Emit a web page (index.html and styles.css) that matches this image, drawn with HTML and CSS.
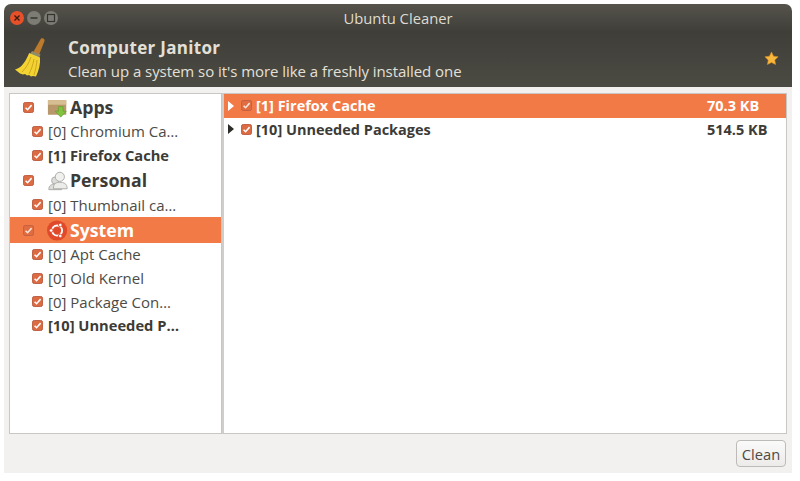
FILE: index.html
```html
<!DOCTYPE html>
<html lang="en">
<head>
<meta charset="utf-8">
<title>Ubuntu Cleaner</title>
<link rel="stylesheet" href="styles.css">
</head>
<body>
<svg class="defs" width="0" height="0" aria-hidden="true"><defs>
  <symbol id="check" viewBox="0 0 12 12">
    <rect x="0.5" y="0.5" width="11" height="11" rx="2" fill="#dc6a42" stroke="#b9583a"/>
    <path d="M2.8 6.2 5 8.4 9.4 3.4" fill="none" stroke="#fff" stroke-width="1.7"/>
  </symbol>
</defs></svg>
<main class="window">
  <header class="header">
    <div class="titlebar">
      <div class="controls">
        <span class="ctl ctl-close"><svg viewBox="0 0 14 14" width="14" height="14"><path d="M4.500 4.500l5 5M9.500 4.500l-5 5" stroke="#3a1d12" stroke-width="1.400"/></svg></span>
        <span class="ctl"><svg viewBox="0 0 14 14" width="14" height="14"><path d="M3.500 7h7" stroke="#34332e" stroke-width="1.500"/></svg></span>
        <span class="ctl"><svg viewBox="0 0 14 14" width="14" height="14"><rect x="3.500" y="3.500" width="7" height="7" fill="none" stroke="#34332e" stroke-width="1.200"/></svg></span>
      </div>
      <div class="title">Ubuntu Cleaner</div>
    </div>
    <div class="banner">
      <svg class="broom" viewBox="0 0 36 42" width="36" height="42">
        <path d="M29 1.500c2-1 4 .500 3.500 2.500L27 18l-6-2.500z" fill="#bb7a2c"/>
        <path d="M20 14l8.500 3.500-1.500 3.500-9-4z" fill="#8f8c6c"/>
        <path d="M17 16l11 4.500c.5 6-1 13-4 19l-3-.500-2 .500-2-1.500-2 .500-2-1.500-2 .500-3-1-5-4c4-1 9-4 14-16z" fill="#f3d332"/>
        <path d="M19 20c-2 6-5 11-9 15M22 22c-1 6-3 11-5 15M25 23c-.5 5-1.500 10-3 15" fill="none" stroke="#cda621" stroke-width="1"/>
      </svg>
      <div class="banner-text">
        <div class="banner-title">Computer Janitor</div>
        <div class="banner-sub">Clean up a system so it's more like a freshly installed one</div>
      </div>
      <svg class="star" viewBox="0 0 16 16" width="15" height="15"><path d="M8 1l2.200 4.500 4.900.700-3.600 3.400.900 4.900L8 12.200l-4.400 2.300.900-4.900L.900 6.200l4.900-.700z" fill="#f6b73c" stroke="#d98a1f" stroke-width=".6"/></svg>
    </div>
  </header>
  <div class="content">
    <div class="panes">
      <nav class="side">
        <div class="row-cat"><svg class="cb"><use href="#check"/></svg>
          <svg class="cat-icon" viewBox="0 0 24 24"><path d="M1 4h20v16H1z" fill="#b8986a"/><path d="M1 4h20v5H1z" fill="#d6bd92"/><path d="M12.500 11h5v5h3.500l-6 6.500-6-6.500h3.500z" fill="#82c23f" stroke="#5a9628" stroke-width=".6"/></svg>
          <span>Apps</span></div>
        <div class="row-item"><svg class="cb"><use href="#check"/></svg><span>[0] Chromium Ca…</span></div>
        <div class="row-item bold"><svg class="cb"><use href="#check"/></svg><span>[1] Firefox Cache</span></div>
        <div class="row-cat"><svg class="cb"><use href="#check"/></svg>
          <svg class="cat-icon" viewBox="0 0 24 24"><circle cx="9" cy="12" r="4" fill="#dcdcd8" stroke="#a9a9a4"/><path d="M2 22c0-5 3-6 7-6s7 1 7 6z" fill="#dcdcd8" stroke="#a9a9a4"/><circle cx="14" cy="8" r="5" fill="#f0f0ee" stroke="#a9a9a4"/><path d="M7 21c0-6 3-7 7-7s8 1 8 7z" fill="#ececea" stroke="#a9a9a4"/></svg>
          <span>Personal</span></div>
        <div class="row-item"><svg class="cb"><use href="#check"/></svg><span>[0] Thumbnail ca…</span></div>
        <div class="row-cat selected"><svg class="cb"><use href="#check"/></svg>
          <svg class="cat-icon" viewBox="0 0 24 24"><circle cx="11" cy="12" r="11" fill="#e0492a"/><circle cx="11" cy="12" r="5.500" fill="none" stroke="#fff" stroke-width="2"/><circle cx="4.500" cy="12" r="2" fill="#fff" stroke="#e0492a"/><circle cx="14.500" cy="6" r="2" fill="#fff" stroke="#e0492a"/><circle cx="14.500" cy="18" r="2" fill="#fff" stroke="#e0492a"/></svg>
          <span>System</span></div>
        <div class="row-item"><svg class="cb"><use href="#check"/></svg><span>[0] Apt Cache</span></div>
        <div class="row-item"><svg class="cb"><use href="#check"/></svg><span>[0] Old Kernel</span></div>
        <div class="row-item"><svg class="cb"><use href="#check"/></svg><span>[0] Package Con…</span></div>
        <div class="row-item bold"><svg class="cb"><use href="#check"/></svg><span>[10] Unneeded P…</span></div>
      </nav>
      <section class="list">
        <div class="list-row selected"><span class="arrow"></span><svg class="cb"><use href="#check"/></svg><span class="name">[1] Firefox Cache</span><span class="size">70.3 KB</span></div>
        <div class="list-row"><span class="arrow"></span><svg class="cb"><use href="#check"/></svg><span class="name">[10] Unneeded Packages</span><span class="size">514.5 KB</span></div>
      </section>
    </div>
    <footer class="footer"><button class="btn" type="button">Clean</button></footer>
  </div>
</main>
</body>
</html>
```
FILE: styles.css
```css
* { box-sizing: border-box; }
html, body { margin: 0; height: 100%; background: #fff; }
body { padding: 4px 8px 8px 4px; font-family: "Open Sans", "Noto Sans", sans-serif; overflow: hidden; }
.defs { position: absolute; }
.window { width: 788px; height: 469px; display: flex; flex-direction: column; background: #f2f1f0; border-radius: 7px 7px 0 0; overflow: hidden; }
.header { height: 83px; flex: none; background: linear-gradient(#55534c 0, #3f3e38 28px, #4b4a43 83px); color: #e4e0d8; }
.titlebar { height: 27px; display: flex; align-items: center; position: relative; }
.controls { display: flex; gap: 3px; padding-left: 6px; position: relative; z-index: 1; }
.ctl { width: 14px; height: 14px; border-radius: 50%; background: #7c7b74; display: flex; }
.ctl-close { background: #e8502a; }
.title { position: absolute; left: 0; right: 0; text-align: center; font-size: 14.800px; color: #dfdbd2; }
.banner { flex: 1; display: flex; align-items: flex-start; height: 56px; position: relative; }
.broom { margin: 6px 0 0 8px; flex: none; }
.banner-text { margin-left: 20px; margin-top: 6px; flex: 1; }
.banner-title { font-size: 17px; font-weight: 700; line-height: 21px; letter-spacing: .3px; }
.banner-sub { font-size: 15px; line-height: 20px; margin-top: 3px; letter-spacing: -.05px; }
.star { margin: 20px 13px 0 0; flex: none; }
.content { flex: 1; display: flex; flex-direction: column; padding: 6px 5px 0; min-height: 0; }
.panes { height: 341px; display: flex; flex: none; }
.side, .list { background: #fff; border: 1px solid #c9c7c4; }
.side { width: 213px; flex: none; }
.list { flex: 1; border-left: 2px solid #d0cecb; }
.cb { width: 11px; height: 11px; flex: none; }
.row-cat { height: 26px; display: flex; align-items: center; padding-left: 13px; font-weight: 700; font-size: 17.700px; color: #3c3b37; }
.row-cat .cat-icon { width: 22px; height: 23px; margin: 0 1px 0 13px; flex: none; }
.row-item { height: 23.700px; display: flex; align-items: center; padding: 0 0 1px 22px; font-size: 15px; color: #4c4b46; }
.row-item .cb { margin-right: 5px; }
.row-item.bold { font-weight: 700; font-size: 14.700px; color: #3c3b37; }
.list-row { height: 23.500px; display: flex; align-items: center; padding-left: 4px; font-size: 14.500px; font-weight: 700; color: #3c3b37; }
.selected { background: #f17a47; color: #fff; }
.selected .cb { opacity: .8; }
.arrow { width: 0; height: 0; border-left: 6px solid #2d2c28; border-top: 5px solid transparent; border-bottom: 5px solid transparent; margin-right: 7px; }
.list-row.selected .arrow { border-left-color: #fff; }
.name { width: 451px; margin-left: 4px; }
.btn { font: 14.700px "Open Sans", "Noto Sans", sans-serif; color: #4c4b46; width: 50px; height: 27px; padding: 0; background: linear-gradient(#fafafa, #ecebe9); border: 1px solid #bdbbb7; border-radius: 4px; }
.footer { display: flex; justify-content: flex-end; padding: 6px 1px 0 0; }
```
